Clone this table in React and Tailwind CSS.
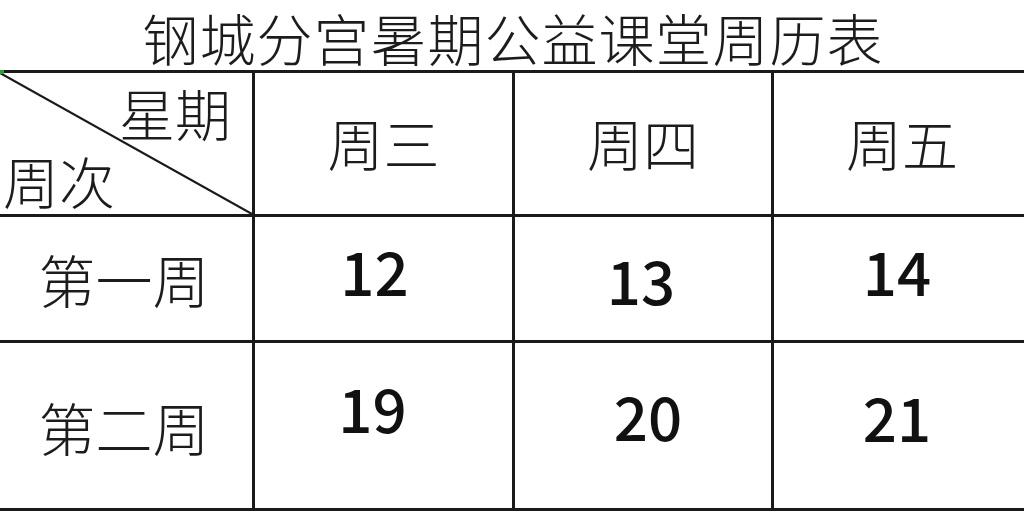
import React from "react";

const cjk = { fontFamily: '"Noto Sans CJK SC", "Noto Sans", sans-serif' };

function Num({ children, className }) {
  return (
    <span
      className={"text-[60px] leading-none font-medium text-[#111] " + className}
      style={cjk}
    >
      {children}
    </span>
  );
}

export default function App() {
  return (
    <div className="w-[1024px] h-[512px] bg-white overflow-hidden text-[#1c1c1c]" style={cjk}>
      <div className="h-[70px] flex items-center justify-center pl-[2px] pt-[4px]">
        <h1 className="text-[56px] leading-[60px] font-light tracking-[1px] whitespace-nowrap">
          钢城分宫暑期公益课堂周历表
        </h1>
      </div>
      <div className="grid grid-cols-[255px_260px_259px_250px] grid-rows-[144px_126px_168px] border-t-[3px] border-[#1a1a1a]">
        {/* header diagonal cell */}
        <div className="relative border-r-[3px] border-b-[3px] border-[#1a1a1a]">
          <svg className="absolute inset-0" width="252" height="141" viewBox="0 0 252 141">
            <line x1="0" y1="0" x2="252" y2="141" stroke="#1a1a1a" strokeWidth="2.2" />
          </svg>
          <div className="absolute left-[0px] top-[-3px] w-[4px] h-[4px] bg-[#2e9e3a]" />
          <span className="absolute right-[21px] top-[11px] text-[56px] leading-none font-light">星期</span>
          <span className="absolute left-[3px] top-[79px] text-[56px] leading-none font-light">周次</span>
        </div>
        <div className="flex items-center justify-center border-r-[3px] border-b-[3px] border-[#1a1a1a] pb-[4px]">
          <span className="text-[56px] leading-none font-light">周三</span>
        </div>
        <div className="flex items-center justify-center border-r-[3px] border-b-[3px] border-[#1a1a1a] pb-[4px]">
          <span className="text-[56px] leading-none font-light">周四</span>
        </div>
        <div className="flex items-center justify-center border-b-[3px] border-[#1a1a1a] pb-[4px] pl-[6px]">
          <span className="text-[56px] leading-none font-light">周五</span>
        </div>

        {/* row 1 */}
        <div className="flex items-center justify-center border-r-[3px] border-b-[3px] border-[#1a1a1a] pr-[4px]">
          <span className="text-[57px] leading-none font-light">第一周</span>
        </div>
        <div className="flex items-center justify-center border-r-[3px] border-b-[3px] border-[#1a1a1a]">
          <Num className="mb-[18px] mr-[18px]">12</Num>
        </div>
        <div className="flex items-center justify-center border-r-[3px] border-b-[3px] border-[#1a1a1a]">
          <Num className="mr-[4px]">13</Num>
        </div>
        <div className="flex items-center justify-center border-b-[3px] border-[#1a1a1a]">
          <Num className="mb-[18px] mr-[4px]">14</Num>
        </div>

        {/* row 2 */}
        <div className="flex items-center justify-center border-r-[3px] border-b-[3px] border-[#1a1a1a] pr-[4px] pt-[2px]">
          <span className="text-[57px] leading-none font-light">第二周</span>
        </div>
        <div className="flex items-center justify-center border-r-[3px] border-b-[3px] border-[#1a1a1a]">
          <Num className="mb-[38px] mr-[22px]">19</Num>
        </div>
        <div className="flex items-center justify-center border-r-[3px] border-b-[3px] border-[#1a1a1a]">
          <Num className="mb-[22px] ml-[10px]">20</Num>
        </div>
        <div className="flex items-center justify-center border-b-[3px] border-[#1a1a1a]">
          <Num className="mb-[20px] mr-[4px]">21</Num>
        </div>
      </div>
    </div>
  );
}
